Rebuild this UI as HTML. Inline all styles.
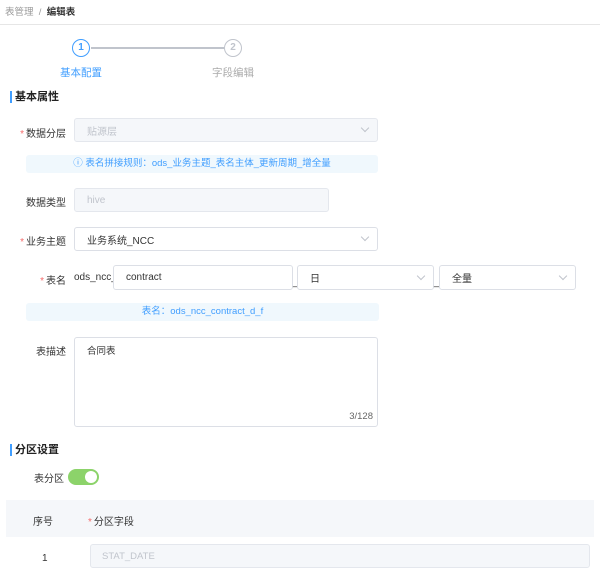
<!DOCTYPE html>
<html><head><meta charset="utf-8"><style>
*{box-sizing:border-box;margin:0;padding:0}
body{width:600px;height:577px;overflow:hidden;background:#fff;font-family:"Liberation Sans","Noto Sans CJK SC",sans-serif;font-size:10px;color:#333;position:relative}
.a{position:absolute}
.lbl{position:absolute;text-align:right;width:66px;left:0;font-size:10px;color:#333}
.req{color:#f56c6c;margin-right:2px}
.box{position:absolute;border:1px solid #dcdfe6;border-radius:3px;background:#fff;display:flex;align-items:center;padding:0 12px}
.dis{background:#f5f7fa;border-color:#e4e7ed;color:#c0c4cc}
.arr{position:absolute;right:9px;top:50%;margin-top:-5px;width:6px;height:6px;border-right:1px solid #c0c4cc;border-bottom:1px solid #c0c4cc;transform:rotate(45deg)}
.info{position:absolute;background:#f0f8fd;color:#409eff;font-size:9.5px;text-align:center;border-radius:3px}
.sec{position:absolute;left:10px;font-weight:bold;font-size:11px;color:#222;border-left:2px solid #409eff;padding-left:3px;line-height:12px}
</style></head><body>
<div class="a" style="left:0;top:0;width:600px;height:25px;border-bottom:1px solid #e6e6e6"></div>
<div class="a" style="left:5px;top:4px;font-size:9.5px;color:#999">表管理 &nbsp;/&nbsp; <b style="color:#333">编辑表</b></div>

<div class="a" style="left:72px;top:39px;width:18px;height:18px;border:1.5px solid #409eff;border-radius:50%;color:#409eff;font-size:10px;text-align:center;line-height:15px;font-weight:bold">1</div>
<div class="a" style="left:91px;top:47px;width:133px;height:2px;background:#c0c4cc"></div>
<div class="a" style="left:224px;top:39px;width:18px;height:18px;border:1.5px solid #c0c4cc;border-radius:50%;color:#c0c4cc;font-size:10px;text-align:center;line-height:15px;font-weight:bold">2</div>
<div class="a" style="left:60px;top:65px;font-size:10.5px;color:#409eff">基本配置</div>
<div class="a" style="left:212px;top:65px;font-size:10.5px;color:#aaa">字段编辑</div>

<div class="sec" style="top:91px">基本属性</div>

<div class="lbl" style="top:125px"><span class="req">*</span>数据分层</div>
<div class="box dis" style="left:74px;top:118px;width:304px;height:24px">贴源层<div class="arr"></div></div>
<div class="info" style="left:26px;top:155px;width:352px;height:18px;line-height:18px">ⓘ 表名拼接规则：ods_业务主题_表名主体_更新周期_增全量</div>

<div class="lbl" style="top:194px">数据类型</div>
<div class="box dis" style="left:74px;top:188px;width:255px;height:24px">hive</div>

<div class="lbl" style="top:233px"><span class="req">*</span>业务主题</div>
<div class="box" style="left:74px;top:227px;width:304px;height:24px">业务系统_NCC<div class="arr"></div></div>

<div class="lbl" style="top:272px"><span class="req">*</span>表名</div>
<div class="a" style="left:74px;top:272px">ods_ncc_</div>
<div class="box" style="left:113px;top:265px;width:180px;height:25px">contract</div>
<div class="a" style="left:293px;top:277px">_</div>
<div class="box" style="left:297px;top:265px;width:137px;height:25px">日<div class="arr"></div></div>
<div class="a" style="left:434px;top:277px">_</div>
<div class="box" style="left:439px;top:265px;width:137px;height:25px">全量<div class="arr"></div></div>
<div class="info" style="left:26px;top:303px;width:353px;height:18px;line-height:18px">表名：ods_ncc_contract_d_f</div>

<div class="lbl" style="top:343px">表描述</div>
<div class="box" style="left:74px;top:337px;width:304px;height:90px;padding:5px 12px;font-size:9.5px;display:block">合同表<div class="a" style="right:4px;bottom:4px;color:#666">3/128</div></div>

<div class="sec" style="top:444px">分区设置</div>
<div class="a" style="left:34px;top:470px">表分区</div>
<div class="a" style="left:68px;top:469px;width:31px;height:16px;background:#8cd36a;border-radius:8px"><div class="a" style="right:2px;top:2px;width:12px;height:12px;background:#fff;border-radius:50%"></div></div>

<div class="a" style="left:6px;top:500px;width:588px;height:37px;background:#f5f7fa"></div>
<div class="a" style="left:33px;top:513px">序号</div>
<div class="a" style="left:88px;top:513px"><span class="req">*</span>分区字段</div>
<div class="a" style="left:42px;top:553px">1</div>
<div class="box dis" style="left:90px;top:544px;width:500px;height:24px;padding:0 11px;font-size:9.5px">STAT_DATE</div>
</body></html>
